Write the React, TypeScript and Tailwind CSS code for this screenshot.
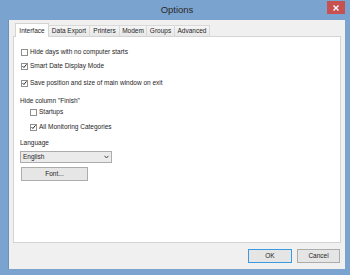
import React from 'react';

const FONT = { fontFamily: '"Liberation Sans", Arial, sans-serif' };

const Check = ({ checked }: { checked?: boolean }) => (
  <span className="flex h-[7px] w-[7px] shrink-0 items-center justify-center border border-[#8f8f8f] bg-white">
    {checked && (
      <svg width="6" height="6" viewBox="0 0 6 6">
        <path d="M0.6 3.1 L2.3 4.8 L5.4 1" fill="none" stroke="#222" strokeWidth="1.2" />
      </svg>
    )}
  </span>
);

const CheckRow = ({ label, checked, className = '' }: { label: string; checked?: boolean; className?: string }) => (
  <div className={`flex h-[8px] items-center gap-[2px] ${className}`}>
    <Check checked={checked} />
    <span className="leading-none">{label}</span>
  </div>
);

const tabs = ['Interface', 'Data Export', 'Printers', 'Modem', 'Groups', 'Advanced'];

export default function App() {
  return (
    <div className="flex h-[275px] w-[350px] flex-col overflow-hidden bg-[#7ba3cf] text-[6.5px] text-[#1e1e1e]" style={FONT}>
      {/* title bar */}
      <div className="relative flex h-[20px] shrink-0 items-center justify-center pl-[4px]">
        <span className="text-[9.5px] text-[#2a2a2a]">Options</span>
        <div className="absolute right-[5px] top-[1px] flex h-[13px] w-[18px] items-center justify-center bg-[#c75050]">
          <svg width="6" height="6" viewBox="0 0 6 6">
            <path d="M0.5 0.5 L5.5 5.5 M5.5 0.5 L0.5 5.5" stroke="#fff" strokeWidth="1.4" />
          </svg>
        </div>
      </div>

      {/* client */}
      <div className="ml-[8px] mr-[5px] flex h-[249px] shrink-0 flex-col border-l border-[#6f8fb5] bg-[#f0f0f0] px-[4px] pt-[3px]">
        {/* tabs */}
        <div className="flex h-[13px] items-end pl-[2px]">
          {tabs.map((t, i) =>
            i === 0 ? (
              <div key={t} className="relative z-10 -mb-px flex h-[14px] w-[34px] items-center justify-center border border-b-0 border-[#d4d4d4] bg-white">
                {t}
              </div>
            ) : (
              <div
                key={t}
                className={`flex h-[11px] items-center justify-center border border-b-0 border-l-0 border-[#d9d9d9] bg-gradient-to-b from-[#f5f5f5] to-[#e8e8e8] ${
                  ['w-[41px]', 'w-[30px]', 'w-[27px]', 'w-[28px]', 'w-[35px]'][i - 1]
                }`}
              >
                {t}
              </div>
            )
          )}
        </div>

        {/* panel */}
        <div className="flex h-[207px] flex-col border border-[#d4d4d4] bg-white pl-[6px] pt-[11px]">
          <CheckRow label="Hide days with no computer starts" className="ml-[1px]" />
          <CheckRow label="Smart Date Display Mode" checked className="ml-[1px] mt-[6px]" />
          <CheckRow label="Save position and size of main window on exit" checked className="ml-[1px] mt-[9px]" />
          <div className="mt-[10px] flex h-[8px] items-center leading-none">Hide column "Finish"</div>
          <CheckRow label="Startups" className="ml-[10px] mt-[3px]" />
          <CheckRow label="All Monitoring Categories" checked className="ml-[10px] mt-[7px]" />
          <div className="mt-[8px] flex h-[8px] items-center leading-none">Language</div>
          <div className="mt-[4px] flex h-[12px] w-[92px] items-center justify-between border border-[#acacac] bg-[#ebebeb] pl-[2px] pr-[2px]">
            <span className="leading-none">English</span>
            <svg width="5" height="4" viewBox="0 0 5 4">
              <path d="M0.5 0.8 L2.5 3 L4.5 0.8" fill="none" stroke="#444" strokeWidth="1" />
            </svg>
          </div>
          <div className="ml-[1px] mt-[4px] flex h-[14px] w-[67px] items-center justify-center border border-[#acacac] bg-[#e6e6e6] leading-none">
            Font...
          </div>
        </div>

        {/* buttons */}
        <div className="mt-[6px] flex justify-end gap-[5px] pr-[1px]">
          <div className="flex h-[14px] w-[44px] items-center justify-center border border-[#3c9be0] bg-[#e5e5e5] leading-none">OK</div>
          <div className="flex h-[14px] w-[43px] items-center justify-center border border-[#acacac] bg-[#e5e5e5] leading-none">Cancel</div>
        </div>
      </div>
    </div>
  );
}
